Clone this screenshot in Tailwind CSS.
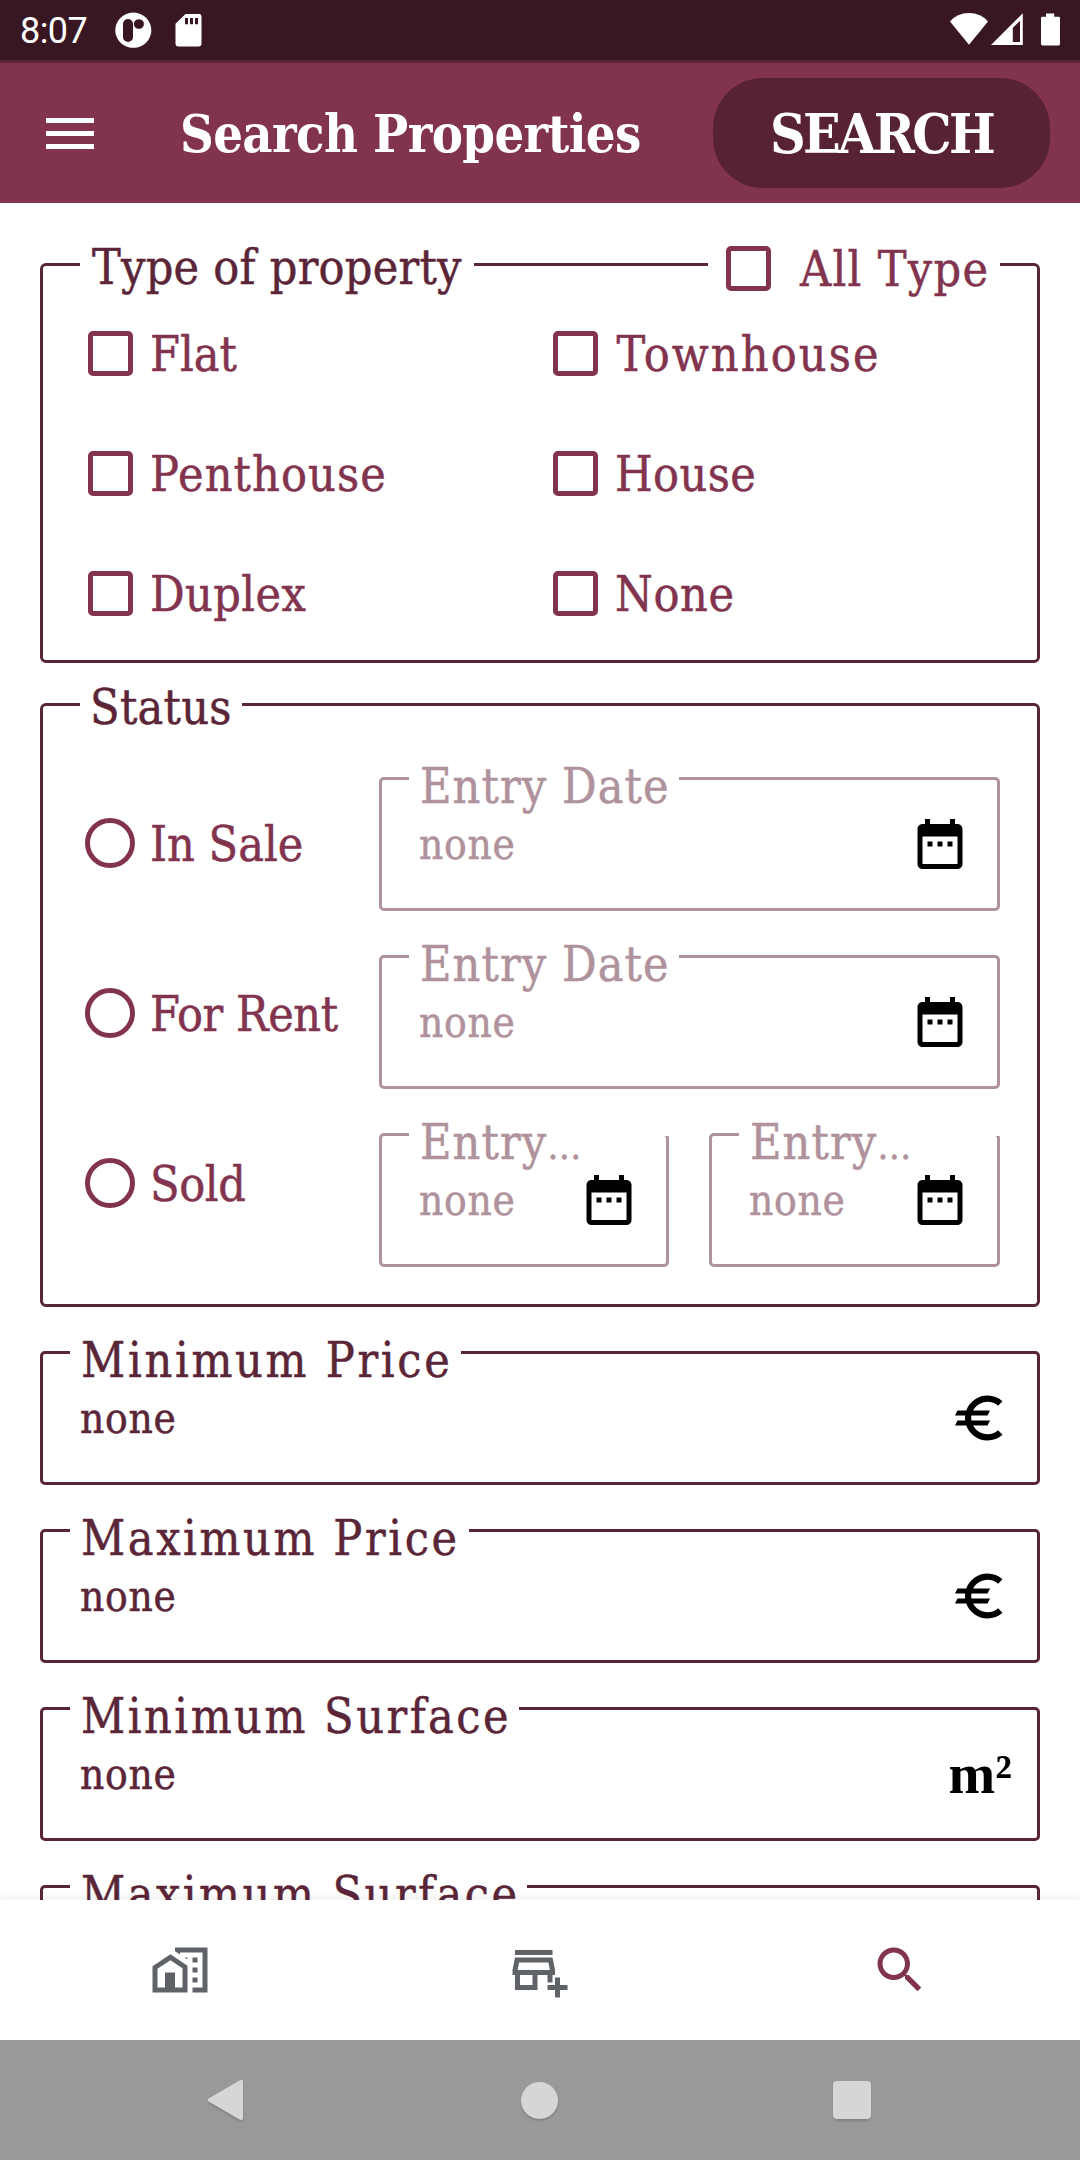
<!DOCTYPE html>
<html lang="en">
<head>
<meta charset="utf-8">
<title>Search Properties</title>
<script src="https://cdn.jsdelivr.net/npm/@tailwindcss/browser@4"></script>
</head>
<body class="bg-white">
<svg class="hidden">
  <symbol id="date" viewBox="0 0 24 24"><path d="M9 11H7v2h2v-2zm4 0h-2v2h2v-2zm4 0h-2v2h2v-2zm2-7h-1V2h-2v2H8V2H6v2H5c-1.11 0-1.99.9-1.99 2L3 20c0 1.1.89 2 2 2h14c1.1 0 2-.9 2-2V6c0-1.1-.9-2-2-2zm0 16H5V9h14v11z"/></symbol>
  <symbol id="euro" viewBox="0 0 24 24"><path d="M15 18.5c-2.51 0-4.68-1.42-5.76-3.5H15l1-2H8.58c-.05-.33-.08-.66-.08-1s.03-.67.08-1H15l1-2H9.24C10.32 6.92 12.5 5.5 15 5.5c1.61 0 3.09.59 4.23 1.57L21 5.3C19.41 3.87 17.3 3 15 3c-3.92 0-7.24 2.51-8.48 6H3l-1 2h4.06c-.04.33-.06.66-.06 1s.02.67.06 1H3l-1 2h4.52c1.24 3.49 4.56 6 8.48 6 2.31 0 4.41-.87 6-2.3l-1.78-1.77c-1.13.98-2.6 1.57-4.22 1.57z"/></symbol>
</svg>
<div class="flex h-[2160px] w-[1080px] flex-col overflow-hidden bg-white font-['DejaVu_Serif_Condensed','DejaVu_Serif',serif] text-[48px] leading-[60px] whitespace-nowrap text-[#5b2538] [-webkit-text-stroke:0.5px]">

  <!-- Status bar -->
  <header class="flex h-[63px] shrink-0 items-start justify-between border-b-3 border-[#5b2538] bg-[#381722] text-white [-webkit-text-stroke:0]">
    <div class="flex h-[60px] items-center pl-5">
      <span class="w-[95px] pt-0.5 font-[Roboto,sans-serif] text-[36px] leading-[58px] tracking-[-0.6px]">8:07</span>
      <svg class="h-[60px] w-[90px]" viewBox="115 0 90 62" preserveAspectRatio="none" fill="#fff">
        <path fill-rule="evenodd" d="M133.300 13a18 18.200 0 1 0 .01 0zM128 19.600a5 5 0 0 1 5 5v13.800a5 5 0 0 1-10 0V24.600a5 5 0 0 1 5-5zM138.900 19.800a5 5 0 1 1-.01 0z"/>
        <path fill-rule="evenodd" d="M185.500 14.500H199a2.500 2.500 0 0 1 2.500 2.500v28.500a2.500 2.500 0 0 1-2.500 2.500h-21a2.500 2.500 0 0 1-2.500-2.500V24.500zM185 18.500v6.500h3v-6.500zm5 0v6.500h3v-6.500zm5 0v6.500h3v-6.500z"/>
      </svg>
    </div>
    <svg class="h-[60px] w-[140px]" viewBox="940 0 140 62" preserveAspectRatio="none" fill="#fff">
      <path d="M950 22.300Q957 13.500 969 13.500T988 22.300L969 46.200z"/>
      <path fill-rule="evenodd" d="M1022.800 13.600V46.500H991zM1020 21.500l-7.200 7.200V43.300H1020z"/>
      <path d="M1046 14h8.200v3.200h4.300a1.500 1.500 0 0 1 1.500 1.500V45.500a1.500 1.500 0 0 1-1.500 1.500h-16a1.500 1.500 0 0 1-1.500-1.500V18.700a1.500 1.500 0 0 1 1.500-1.500h3.500z"/>
    </svg>
  </header>

  <!-- App bar -->
  <div class="flex h-[140px] shrink-0 items-center bg-[#82334e] pr-[30px] pl-[46px] font-bold text-white [-webkit-text-stroke:0]">
    <div class="flex h-[31px] w-12 flex-col justify-between">
      <div class="h-[5px] bg-white"></div><div class="h-[5px] bg-white"></div><div class="h-[5px] bg-white"></div>
    </div>
    <h1 class="ml-[86px] w-[533px] pt-0.5 text-[52px] tracking-[-0.6px]">Search Properties</h1>
    <button class="h-[110px] w-[337px] rounded-[50px] bg-[#572234] pt-0.5 text-[55px] tracking-[-2.7px]">SEARCH</button>
  </div>

  <!-- Scrolling form -->
  <main class="h-[1697px] shrink-0 overflow-hidden px-10 pt-[60px]">
    <section class="relative h-[400px] rounded-md border-3 border-[#5b2538]">
      <div class="absolute top-[-29px] left-[37px] w-[394px] bg-white pl-3 tracking-[0.25px]">Type of property</div>
      <label class="absolute top-[-27px] left-[665px] flex w-[292px] items-center bg-white pl-[17.5px] text-[#82344f]">
        <span class="mb-[2px] size-[45px] rounded-[5px] border-5 border-[#82344f]"></span><span class="ml-[29.5px] tracking-[1.3px]">All Type</span>
      </label>
      <div class="grid auto-rows-[120px] grid-cols-[465px_1fr] pt-[27px] pl-[44.5px] text-[#82344f]">
        <label class="flex items-center"><span class="size-[45px] rounded-[5px] border-5 border-[#82344f]"></span><span class="ml-[17.5px] pt-px">Flat</span></label>
        <label class="flex items-center"><span class="size-[45px] rounded-[5px] border-5 border-[#82344f]"></span><span class="ml-[19px] pt-px tracking-[2.1px]">Townhouse</span></label>
        <label class="flex items-center"><span class="size-[45px] rounded-[5px] border-5 border-[#82344f]"></span><span class="ml-[17.5px] pt-px tracking-[1.1px]">Penthouse</span></label>
        <label class="flex items-center"><span class="size-[45px] rounded-[5px] border-5 border-[#82344f]"></span><span class="ml-[17.5px] pt-px tracking-[0.4px]">House</span></label>
        <label class="flex items-center"><span class="size-[45px] rounded-[5px] border-5 border-[#82344f]"></span><span class="ml-[17.5px] pt-px tracking-[0.4px]">Duplex</span></label>
        <label class="flex items-center"><span class="size-[45px] rounded-[5px] border-5 border-[#82344f]"></span><span class="ml-[17.5px] pt-px tracking-[0.6px]">None</span></label>
      </div>
    </section>

    <section class="relative mt-10 flex h-[604px] rounded-md border-3 border-[#5b2538]">
      <div class="absolute top-[-29px] left-[37px] w-[162px] bg-white pl-[10px] tracking-[0.3px]">Status</div>
      <div class="flex w-[336px] flex-col pt-[52px] pl-[42px] text-[#82344f]">
        <label class="flex h-[170px] items-center"><span class="size-[50px] rounded-full border-5 border-[#82344f]"></span><span class="ml-[15px] pt-px">In Sale</span></label>
        <label class="flex h-[170px] items-center"><span class="size-[50px] rounded-full border-5 border-[#82344f]"></span><span class="ml-[15px] pt-px tracking-[-0.4px]">For Rent</span></label>
        <label class="flex h-[170px] items-center"><span class="size-[50px] rounded-full border-5 border-[#82344f]"></span><span class="ml-[15px] pt-px tracking-[-0.4px]">Sold</span></label>
      </div>
      <div class="flex w-[621px] flex-col gap-[44px] pt-[71px] text-[#af929b]">
        <div class="relative flex h-[134px] items-start justify-between rounded-[5px] border-3 border-[#af929b] pr-[27px] pl-[37px]">
          <div class="absolute top-[-3px] left-[27px] h-[3px] w-[270px] bg-white"></div>
          <div class="absolute top-[-24px] left-[38px] tracking-[1.1px]">Entry Date</div>
          <span class="pt-[37px] text-[42px] leading-[56px] tracking-[0.7px]">none</span>
          <svg class="mt-[34px] size-[60px] fill-black"><use href="#date"/></svg>
        </div>
        <div class="relative flex h-[134px] items-start justify-between rounded-[5px] border-3 border-[#af929b] pr-[27px] pl-[37px]">
          <div class="absolute top-[-3px] left-[27px] h-[3px] w-[270px] bg-white"></div>
          <div class="absolute top-[-24px] left-[38px] tracking-[1.1px]">Entry Date</div>
          <span class="pt-[37px] text-[42px] leading-[56px] tracking-[0.7px]">none</span>
          <svg class="mt-[34px] size-[60px] fill-black"><use href="#date"/></svg>
        </div>
        <div class="flex gap-10">
          <div class="relative flex h-[134px] w-[290px] items-start justify-between rounded-[5px] border-3 border-[#af929b] pr-[27px] pl-[37px]">
            <div class="absolute top-[-3px] right-[-3px] left-[27px] h-[3px] bg-white"></div>
            <div class="absolute top-[-24px] left-[38px] tracking-[1.1px]">Entry<span class="text-[38px]">…</span></div>
            <span class="pt-[37px] text-[42px] leading-[56px] tracking-[0.7px]">none</span>
            <svg class="mt-[34px] size-[60px] fill-black"><use href="#date"/></svg>
          </div>
          <div class="relative flex h-[134px] w-[291px] items-start justify-between rounded-[5px] border-3 border-[#af929b] pr-[27px] pl-[37px]">
            <div class="absolute top-[-3px] right-[-3px] left-[27px] h-[3px] bg-white"></div>
            <div class="absolute top-[-24px] left-[38px] tracking-[1.1px]">Entry<span class="text-[38px]">…</span></div>
            <span class="pt-[37px] text-[42px] leading-[56px] tracking-[0.7px]">none</span>
            <svg class="mt-[34px] size-[60px] fill-black"><use href="#date"/></svg>
          </div>
        </div>
      </div>
    </section>

    <div class="mt-[44px] flex flex-col gap-[44px]">
      <div class="relative flex h-[134px] items-start justify-between rounded-[5px] border-3 border-[#5b2538] pr-[27px] pl-[37px]">
        <div class="absolute top-[-24px] left-[27px] w-[391px] bg-white pl-[11px] tracking-[2.7px]">Minimum Price</div>
        <span class="pt-[37px] text-[42px] leading-[56px] tracking-[0.7px]">none</span>
        <svg class="mt-[34px] size-[60px] fill-black"><use href="#euro"/></svg>
      </div>
      <div class="relative flex h-[134px] items-start justify-between rounded-[5px] border-3 border-[#5b2538] pr-[27px] pl-[37px]">
        <div class="absolute top-[-24px] left-[27px] w-[399px] bg-white pl-[11px] tracking-[2.6px]">Maximum Price</div>
        <span class="pt-[37px] text-[42px] leading-[56px] tracking-[0.7px]">none</span>
        <svg class="mt-[34px] size-[60px] fill-black"><use href="#euro"/></svg>
      </div>
      <div class="relative flex h-[134px] items-start justify-between rounded-[5px] border-3 border-[#5b2538] pr-[25px] pl-[37px]">
        <div class="absolute top-[-24px] left-[27px] w-[449px] bg-white pl-[11px] tracking-[2.5px]">Minimum Surface</div>
        <span class="pt-[37px] text-[42px] leading-[56px] tracking-[0.7px]">none</span>
        <span class="pt-[34px] font-['Liberation_Serif',serif] text-[56px] leading-[60px] font-bold text-black [-webkit-text-stroke:0]">m²</span>
      </div>
      <div class="relative flex h-[134px] items-start rounded-[5px] border-3 border-[#5b2538]">
        <div class="absolute top-[-24px] left-[27px] w-[457px] bg-white pl-[11px] tracking-[2.5px]">Maximum Surface</div>
      </div>
    </div>
  </main>

  <!-- Bottom navigation -->
  <nav class="relative grid h-[140px] shrink-0 grid-cols-3 justify-items-center bg-white pt-10 shadow-[0_-2px_10px_rgba(0,0,0,0.08)]">
    <svg class="size-[60px] fill-[#5f6368]" viewBox="0 0 24 24"><path fill-rule="evenodd" d="M8.170 5.700 1 10.480V21h14V10.250zM3 19v-7.500l5.170-3.450L13 11.300V19h-3v-6H6v6z"/><path d="M10 3v1.510l2 1.330V5h9v14h-4v2h6V3zM17 7h2v2h-2zM17 11h2v2h-2zM17 15h2v2h-2zM15 7.830V7h-1.250z"/></svg>
    <svg class="size-[60px] fill-[#5f6368]" viewBox="0 0 24 24"><path d="M15 17h2v-3h1v-2l-1-5H2l-1 5v2h1v6h9v-6h4v3zm-6 1H4v-4h5v4zm-5.960-6l.6-3h11.720l.6 3H3.040zM2 4h15v2H2zM20 18v-3h-2v3h-3v2h3v3h2v-3h3v-2h-3z"/></svg>
    <svg class="size-[60px] fill-[#82334e]" viewBox="0 0 24 24"><path d="M15.500 14h-.79l-.28-.27C15.410 12.590 16 11.110 16 9.500 16 5.910 13.090 3 9.500 3S3 5.910 3 9.500 5.910 16 9.500 16c1.610 0 3.090-.59 4.230-1.570l.27.28v.79l5 4.990L20.490 19l-4.990-5zm-6 0C7.010 14 5 11.990 5 9.500S7.010 5 9.500 5 14 7.010 14 9.500 11.990 14 9.500 14z"/></svg>
  </nav>

  <!-- System navigation -->
  <footer class="relative flex h-[120px] shrink-0 items-center justify-between bg-[#999] pr-[209px] pl-[208px]">
    <svg class="h-[44px] w-[38px] drop-shadow-[0_2px_1px_rgba(0,0,0,0.15)]" viewBox="0 0 38 44"><path d="M2 22 33 4V40z" fill="#d6d6d6" stroke="#d6d6d6" stroke-width="4" stroke-linejoin="round"/></svg>
    <div class="size-[37px] rounded-full bg-[#d6d6d6] shadow-[0_2px_2px_rgba(0,0,0,0.15)]"></div>
    <div class="size-[38px] rounded-[4px] bg-[#d6d6d6] shadow-[0_2px_2px_rgba(0,0,0,0.15)]"></div>
  </footer>
</div>
</body>
</html>
